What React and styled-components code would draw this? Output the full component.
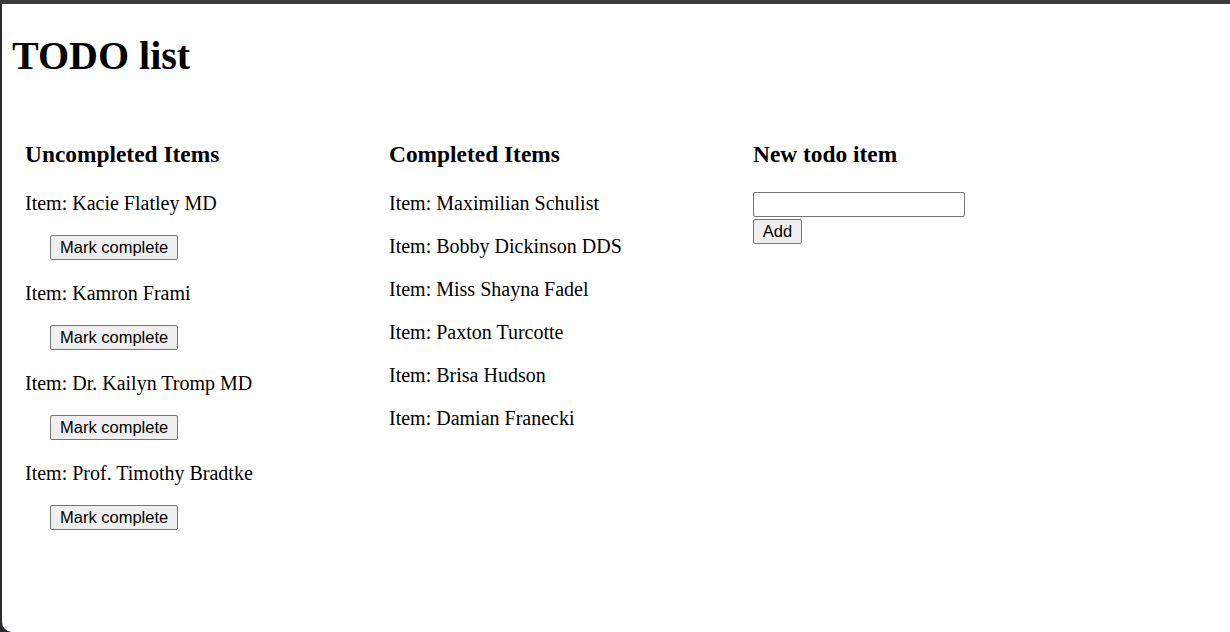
import React, { useState } from 'react';
import styled, { createGlobalStyle } from 'styled-components';

const GlobalStyle = createGlobalStyle`
  html, body {
    margin: 0;
    padding: 0;
    background: #2a2a2c;
    overflow: hidden;
  }
`

const uncompletedStart = [
  'Kacie Flatley MD',
  'Kamron Frami',
  'Dr. Kailyn Tromp MD',
  'Prof. Timothy Bradtke',
];

const completedStart = [
  'Maximilian Schulist',
  'Bobby Dickinson DDS',
  'Miss Shayna Fadel',
  'Paxton Turcotte',
  'Brisa Hudson',
  'Damian Franecki',
];

export default function App() {
  const [uncompleted, setUncompleted] = useState(uncompletedStart);
  const [completed, setCompleted] = useState(completedStart);
  const [text, setText] = useState('');

  const markComplete = (name) => {
    setUncompleted(uncompleted.filter((n) => n !== name));
    setCompleted([...completed, name]);
  };

  const addItem = () => {
    if (!text.trim()) return;
    setUncompleted([...uncompleted, text.trim()]);
    setText('');
  };

  return (
    <>
      <GlobalStyle />
      <TopBar />
      <Window>
        <Title>TODO list</Title>
        <Columns>
          <Column>
            <Heading>Uncompleted Items</Heading>
            {uncompleted.map((name) => (
              <div key={name}>
                <ItemText>Item: {name}</ItemText>
                <ButtonRow>
                  <Button onClick={() => markComplete(name)}>Mark complete</Button>
                </ButtonRow>
              </div>
            ))}
          </Column>
          <Column>
            <Heading>Completed Items</Heading>
            {completed.map((name) => (
              <ItemText key={name}>Item: {name}</ItemText>
            ))}
          </Column>
          <Column>
            <Heading>New todo item</Heading>
            <TextInput value={text} onChange={(e) => setText(e.target.value)} />
            <AddButton onClick={addItem}>Add</AddButton>
          </Column>
        </Columns>
      </Window>
    </>
  )
}

const TopBar = styled.div`
height: 4px;
background: #3b3b3d;
`

const Window = styled.div`
display: flow-root;
margin-left: 2px;
height: 628px;
padding: 0 10px;
background: #fff;
border-bottom-left-radius: 10px;
font-family: "Liberation Serif", "Times New Roman", serif;
color: #000;
`

const Title = styled.h1`
font-size: 40px;
font-weight: bold;
margin: 28px 0 26px;
`

const Columns = styled.div`
display: flex;
padding: 13px 0 0 13px;
`

const Column = styled.div`
width: 364px;
`

const Heading = styled.h3`
font-size: 23.4px;
font-weight: bold;
margin: 23.4px 0;
`

const ItemText = styled.p`
font-size: 20px;
margin: 20px 0;
`

const ButtonRow = styled.div`
font-size: 20px;
padding-left: 25px;
padding-bottom: 2px;
`

const Button = styled.button`
font-family: "Liberation Sans", Arial, sans-serif;
font-size: 16.5px;
height: 25px;
padding: 0 9px;
background: #efefef;
color: #000;
border: 1px solid #767676;
border-radius: 2px;
cursor: pointer;
`

const TextInput = styled.input`
display: block;
box-sizing: border-box;
width: 212px;
height: 25px;
margin: 0;
padding: 1px 3px;
font-size: 16.5px;
border: 1px solid #767676;
border-radius: 2px;
`

const AddButton = styled(Button)`
display: block;
margin-top: 2px;
width: 49px;
padding: 0;
`
